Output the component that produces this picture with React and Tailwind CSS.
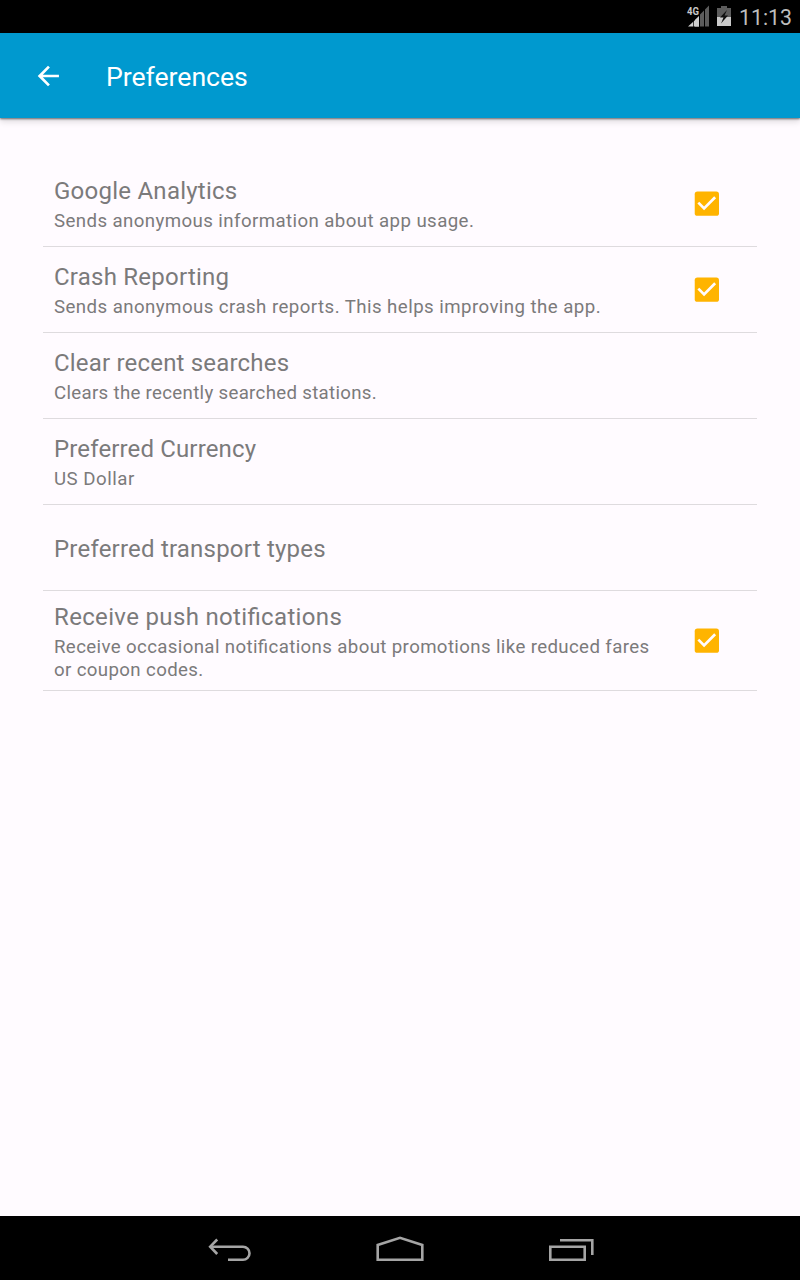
const items = [
  {
    title: 'Google Analytics',
    titleSpacing: 'tracking-[0.25px]',
    summary: ['Sends anonymous information about app usage.'],
    summarySpacing: 'tracking-[0.41px]',
    checked: true,
  },
  {
    title: 'Crash Reporting',
    titleSpacing: 'tracking-[0.24px]',
    summary: ['Sends anonymous crash reports. This helps improving the app.'],
    summarySpacing: 'tracking-[0.44px]',
    checked: true,
  },
  {
    title: 'Clear recent searches',
    titleSpacing: 'tracking-[0.19px]',
    summary: ['Clears the recently searched stations.'],
    summarySpacing: 'tracking-[0.31px]',
  },
  {
    title: 'Preferred Currency',
    titleSpacing: 'tracking-[0.14px]',
    summary: ['US Dollar'],
    summarySpacing: 'tracking-[0.5px]',
  },
  {
    title: 'Preferred transport types',
    titleSpacing: 'tracking-[0.21px]',
    summary: [],
  },
  {
    title: 'Receive push notifications',
    titleSpacing: 'tracking-[0.34px]',
    summary: ['Receive occasional notifications about promotions like reduced fares', 'or coupon codes.'],
    summarySpacing: 'tracking-[0.37px]',
    checked: true,
    tall: true,
  },
];

function StatusBar() {
  return (
    <div className="flex h-[33px] shrink-0 items-center justify-end bg-black pr-2">
      <svg className="h-[33px] w-[52px]" viewBox="0 0 52 33">
        <path d="M2 26.5 L13 16.5 V26.5 Z" fill="#d0d0d0" />
        <path d="M9 20 L13 16 V26.5 H9 Z" fill="#d0d0d0" />
        <path d="M7.5 19 V27 M13.5 15 V27" stroke="#000" strokeWidth="0.7" />
        <path d="M14 14.5 L18 10.5 V26.5 H14 Z M19 9.5 L23 5.5 V26.5 H19 Z" fill="#5c5c5c" />
        <text x="1" y="14.7" fill="#c8c8c8" fontSize="11.5" fontWeight="700" fontFamily="Roboto, sans-serif" textLength="12" lengthAdjust="spacingAndGlyphs">4G</text>
        <path d="M35 6 H41 V8 H45 V17 H31 V8 H35 Z" fill="#5c5c5c" />
        <path d="M31 17 H45 V26 H31 Z" fill="#cacaca" />
        <path d="M41 10 L34 17.5 H37.5 L35 23.5 L42 15.5 H38.5 Z" fill="#101010" />
      </svg>
      <span className="ml-px pt-[2px] text-[21.3px] leading-[33px] text-[#bdbdbd]">11:13</span>
    </div>
  );
}

function Checkbox() {
  return (
    <svg className="mr-[0.5px] h-8 w-8 shrink-0 overflow-visible" viewBox="0 0 24 24" role="img" aria-label="Checked">
      <g transform="translate(-0.2 -0.35)">
        <rect x="3" y="3" width="18.2" height="18.2" rx="2" fill="#ffb400" />
        <path d="M10 17l-5-5 1.41-1.41L10 14.17l7.59-7.59L19 8l-9 9z" fill="#fffbff" />
      </g>
    </svg>
  );
}

function PreferenceRow({ title, titleSpacing, summary, summarySpacing, checked, tall }) {
  return (
    <div className={`flex ${tall ? 'h-[100px]' : 'h-[86px]'} items-center border-b border-[#dedbde] pl-[11px] pr-[34px]`}>
      <div className={`flex-1 text-[#7b7a7b] [font-feature-settings:'liga'_1] ${tall ? 'pt-[2px]' : ''}`}>
        <div className={`text-[24px] leading-8 ${summary.length > 0 ? '' : 'pt-[2px]'} ${titleSpacing}`}>{title}</div>
        {summary.length > 0 && (
          <div className={`pt-[3px] text-[18.67px] leading-[23px] ${summarySpacing}`}>
            {summary.map((line) => (
              <div key={line} className="whitespace-nowrap">{line}</div>
            ))}
          </div>
        )}
      </div>
      {checked && <Checkbox />}
    </div>
  );
}

function NavigationBar() {
  return (
    <div className="flex h-16 shrink-0 items-center justify-center gap-[91px] bg-black">
      <svg className="h-16 w-20" viewBox="0 0 80 64" fill="none" stroke="#a5a5a5" strokeWidth="2.6">
        <path d="M21 30.7 H54 A6.4 6.4 0 0 1 54 43.7 H39" />
        <path d="M28.2 23.5 L21.2 30.7 L28.2 38" />
      </svg>
      <svg className="h-16 w-20" viewBox="0 0 80 64" fill="none" stroke="#a5a5a5" strokeWidth="2.6">
        <path d="M17.7 43.7 V29 L40 21.8 L62.3 29 V43.7 Z" />
      </svg>
      <svg className="h-16 w-20" viewBox="0 0 80 64" fill="none" stroke="#a5a5a5" strokeWidth="2.6">
        <path d="M19.3 30.7 H53.7 V43.7 H19.3 Z M29 24.2 H61.3 V39" />
      </svg>
    </div>
  );
}

export default function App() {
  return (
    <div className="flex h-[1280px] w-[800px] flex-col overflow-hidden bg-[#fffbff] font-[Roboto,sans-serif]">
      <StatusBar />
      <header className="flex h-[85px] shrink-0 items-center bg-[#0099cf] pl-8 text-white shadow-[0_1px_2px_rgba(0,0,0,0.55),0_4px_6px_rgba(0,0,0,0.12)]">
        <svg className="h-8 w-8" viewBox="0 0 24 24" fill="currentColor">
          <path d="M20.2 11H8.13l5.29-5.29L12 4.3l-7.7 7.7 7.7 7.7 1.41-1.41L8.13 13H20.2v-2z" />
        </svg>
        <h1 className="ml-[42px] pt-[2px] text-[26.67px] leading-8 tracking-[-0.05px]">Preferences</h1>
      </header>
      <main className="flex-1 px-[43px] pt-[43px]">
        {items.map((item) => (
          <PreferenceRow key={item.title} {...item} />
        ))}
      </main>
      <NavigationBar />
    </div>
  );
}
